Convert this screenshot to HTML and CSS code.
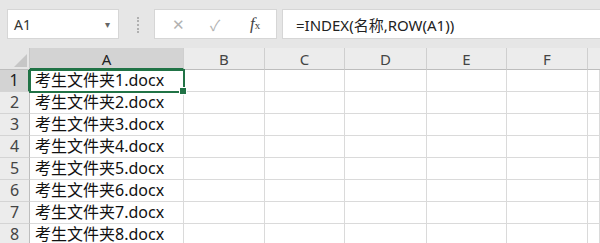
FILE: index.html
```html
<!DOCTYPE html>
<html lang="zh-CN">
<head>
  <meta charset="UTF-8">
  <title>Excel</title>
  <link rel="stylesheet" href="styles.css">
</head>
<body>

  <div class="toolbar">
    <div class="name-box">
      <span>A1</span>
      <span class="drop">&#9662;</span>
    </div>
    <div class="grip"></div>
    <div class="fx-box">
      <span class="icon-x">&#x2715;</span>
      <span class="icon-ok">&#x2713;</span>
      <span class="icon-fx"><i>f</i><small>x</small></span>
    </div>
    <div class="formula">=INDEX(名称,ROW(A1))</div>
  </div>

  <div class="sheet">
    <div class="corner"><div class="tri"></div></div>
    <div class="col-head active">A</div>
    <div class="col-head">B</div>
    <div class="col-head">C</div>
    <div class="col-head">D</div>
    <div class="col-head">E</div>
    <div class="col-head">F</div>
    <div class="col-head last"></div>

    <div class="row-head active">1</div>
    <div class="cell sel">考生文件夹1.docx<div class="handle"></div></div>
    <div class="cell"></div><div class="cell"></div><div class="cell"></div><div class="cell"></div><div class="cell"></div><div class="cell"></div>

    <div class="row-head">2</div>
    <div class="cell">考生文件夹2.docx</div>
    <div class="cell"></div><div class="cell"></div><div class="cell"></div><div class="cell"></div><div class="cell"></div><div class="cell"></div>

    <div class="row-head">3</div>
    <div class="cell">考生文件夹3.docx</div>
    <div class="cell"></div><div class="cell"></div><div class="cell"></div><div class="cell"></div><div class="cell"></div><div class="cell"></div>

    <div class="row-head">4</div>
    <div class="cell">考生文件夹4.docx</div>
    <div class="cell"></div><div class="cell"></div><div class="cell"></div><div class="cell"></div><div class="cell"></div><div class="cell"></div>

    <div class="row-head">5</div>
    <div class="cell">考生文件夹5.docx</div>
    <div class="cell"></div><div class="cell"></div><div class="cell"></div><div class="cell"></div><div class="cell"></div><div class="cell"></div>

    <div class="row-head">6</div>
    <div class="cell">考生文件夹6.docx</div>
    <div class="cell"></div><div class="cell"></div><div class="cell"></div><div class="cell"></div><div class="cell"></div><div class="cell"></div>

    <div class="row-head">7</div>
    <div class="cell">考生文件夹7.docx</div>
    <div class="cell"></div><div class="cell"></div><div class="cell"></div><div class="cell"></div><div class="cell"></div><div class="cell"></div>

    <div class="row-head">8</div>
    <div class="cell">考生文件夹8.docx</div>
    <div class="cell"></div><div class="cell"></div><div class="cell"></div><div class="cell"></div><div class="cell"></div><div class="cell"></div>
  </div>

</body>
</html>
```

FILE: styles.css
```css
body {
  margin: 0;
  width: 600px;
  height: 243px;
  overflow: hidden;
  background: #ffffff;
  font-family: "Noto Sans", "Noto Sans CJK SC", sans-serif;
  color: #222;
}

.toolbar {
  height: 48px;
  background: #e6e6e6;
  display: flex;
  align-items: flex-start;
  padding: 9px 0 0 7px;
  box-sizing: border-box;
}

.name-box {
  width: 112px;
  height: 30px;
  box-sizing: border-box;
  background: #fff;
  border: 1px solid #d6d6d6;
  display: flex;
  align-items: center;
  justify-content: space-between;
  padding: 0 8px 0 6px;
  font-size: 14px;
  color: #333;
}

.name-box .drop {
  font-size: 10px;
  color: #666;
}

.grip {
  width: 0;
  height: 16px;
  margin: 8px 15px 0 18px;
  border-left: 2px dotted #b0b0b0;
}

.fx-box {
  width: 123px;
  height: 30px;
  box-sizing: border-box;
  background: #fff;
  border: 1px solid #d6d6d6;
  display: flex;
  align-items: center;
  padding-left: 17px;
  font-size: 15px;
}

.icon-x {
  color: #b2b2b2;
  width: 38px;
}

.icon-ok {
  color: #b2b2b2;
  width: 40px;
}

.icon-fx {
  font-family: "Liberation Serif", serif;
  font-size: 17px;
  color: #444;
}

.icon-fx small {
  font-size: 11px;
}

.formula {
  flex: 1;
  height: 30px;
  box-sizing: border-box;
  margin-left: 5px;
  background: #fff;
  border: 1px solid #d6d6d6;
  border-right: none;
  padding-left: 13px;
  display: flex;
  align-items: center;
  font-size: 15px;
  color: #222;
}

.sheet {
  display: grid;
  grid-template-columns: 30px 154px 81px 80px 82px 80px 81px 12px;
  grid-auto-rows: 22px;
  grid-template-rows: 22px;
}

.corner {
  background: #e6e6e6;
  border-right: 1px solid #c8c8c8;
  border-bottom: 1px solid #bdbdbd;
  position: relative;
}

.tri {
  position: absolute;
  right: 2px;
  bottom: 2px;
  width: 0;
  height: 0;
  border-left: 13px solid transparent;
  border-bottom: 13px solid #c6c6c6;
}

.col-head {
  background: #ececec;
  border-right: 1px solid #cfcfcf;
  border-bottom: 1px solid #bdbdbd;
  text-align: center;
  font-size: 15px;
  line-height: 22px;
  color: #444;
}

.col-head.active {
  background: #d3d3d3;
  color: #222;
  border-bottom: 2px solid #217346;
}

.col-head.last {
  border-right: none;
}

.row-head {
  background: #ececec;
  border-right: 1px solid #bdbdbd;
  border-bottom: 1px solid #d4d4d4;
  text-align: center;
  font-size: 16px;
  line-height: 21px;
  color: #444;
}

.row-head.active {
  background: #d3d3d3;
  color: #222;
  border-right: 2px solid #217346;
}

.cell {
  border-right: 1px solid #dadada;
  border-bottom: 1px solid #dadada;
  font-size: 16px;
  line-height: 21px;
  padding-left: 5px;
  white-space: nowrap;
  color: #111;
  position: relative;
}

.cell.sel {
  outline: 2px solid #217346;
  outline-offset: -1px;
  z-index: 1;
}

.handle {
  position: absolute;
  right: -4px;
  bottom: -4px;
  width: 6px;
  height: 6px;
  background: #217346;
  border: 1px solid #fff;
}
```
